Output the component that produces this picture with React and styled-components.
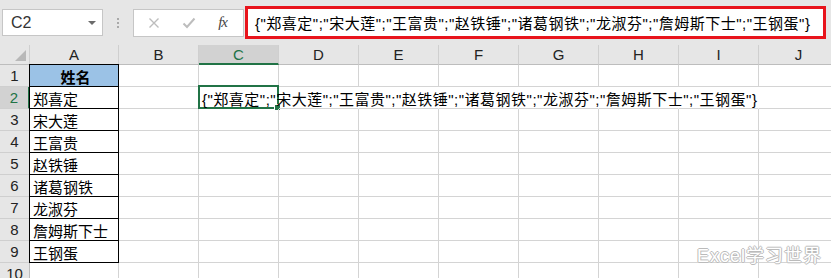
import styled, { createGlobalStyle } from "styled-components";

const GlobalStyle = createGlobalStyle`
  html, body {
    margin: 0;
    padding: 0;
    background: #fff;
    overflow: hidden;
  }
  body {
    font-family: "Liberation Sans", "Noto Sans CJK SC", sans-serif;
  }
`;

const Page = styled.div`
  position: relative;
  width: 831px;
  height: 278px;
  overflow: hidden;
  background: #fff;
`;

const FormulaBar = styled.div`
  display: flex;
  align-items: center;
  height: 45px;
  padding: 0 5px 0 2px;
  box-sizing: border-box;
  background: #e6e6e6;
`;

const NameBox = styled.div`
  display: flex;
  align-items: center;
  justify-content: space-between;
  width: 101px;
  height: 27px;
  box-sizing: border-box;
  padding: 0 6px 0 8px;
  background: #fff;
  border: 1px solid #c6c6c6;
  color: #333;
  font-size: 16px;
`;

const DropArrow = styled.span`
  width: 0;
  height: 0;
  border-left: 4px solid transparent;
  border-right: 4px solid transparent;
  border-top: 4px solid #6b6b6b;
`;

const Grip = styled.div`
  display: flex;
  flex-direction: column;
  gap: 2px;
  margin: 0 14px 0 14px;
  span {
    width: 2px;
    height: 2px;
    background: #a9a9a9;
  }
`;

const ButtonBox = styled.div`
  display: flex;
  align-items: center;
  justify-content: space-between;
  width: 111px;
  height: 28px;
  box-sizing: border-box;
  padding: 0 16px 0 14px;
  background: #fff;
  border: 1px solid #c6c6c6;
`;

const Fx = styled.span`
  font-family: "Liberation Serif", serif;
  font-style: italic;
  font-size: 15px;
  color: #444;
  letter-spacing: -1px;
`;

const FormulaInput = styled.div`
  flex: 1;
  display: flex;
  align-items: center;
  height: 33px;
  margin-left: 1px;
  box-sizing: border-box;
  padding-left: 7px;
  border: 3px solid #e8141c;
  background: #fff;
  color: #000;
  font-size: 15px;
  letter-spacing: 0.5px;
  white-space: nowrap;
`;

const Sheet = styled.div`
  display: grid;
  grid-template-columns: 30px 89px repeat(9, 80px);
  grid-template-rows: 20px;
  grid-auto-rows: 22px;
  background: #fff;
`;

const Corner = styled.div`
  position: relative;
  background: #e6e6e6;
  border-right: 1px solid #cfcfcf;
  border-bottom: 1px solid #bdbdbd;
  box-sizing: border-box;
  &::after {
    content: "";
    position: absolute;
    right: 3px;
    bottom: 3px;
    border-left: 11px solid transparent;
    border-bottom: 11px solid #b8b8b8;
  }
`;

const ColHead = styled.div`
  display: flex;
  align-items: center;
  justify-content: center;
  box-sizing: border-box;
  background: ${(p) => (p.$active ? "#d2d2d2" : "#e6e6e6")};
  border-right: 1px solid #cfcfcf;
  border-bottom: ${(p) => (p.$active ? "2px solid #217346" : "1px solid #bdbdbd")};
  color: ${(p) => (p.$active ? "#217346" : "#222")};
  font-size: 15px;
`;

const RowHead = styled.div`
  display: flex;
  align-items: center;
  justify-content: center;
  box-sizing: border-box;
  background: ${(p) => (p.$active ? "#d2d2d2" : "#e6e6e6")};
  border-bottom: 1px solid #cfcfcf;
  border-right: ${(p) => (p.$active ? "2px solid #217346" : "1px solid #bdbdbd")};
  color: ${(p) => (p.$active ? "#217346" : "#222")};
  font-size: 15px;
`;

const Cell = styled.div`
  position: relative;
  display: flex;
  align-items: center;
  justify-content: ${(p) => (p.$center ? "center" : "flex-start")};
  box-sizing: border-box;
  padding-left: 3px;
  padding-top: 1px;
  white-space: nowrap;
  overflow: visible;
  font-size: 15px;
  font-weight: ${(p) => (p.$bold ? 700 : 400)};
  color: #000;
  background: ${(p) => p.$fill || "transparent"};
  border-bottom: 1px solid ${(p) => (p.$boxed ? "#000" : "#d4d4d4")};
  border-right: 1px solid
    ${(p) => (p.$boxed ? "#000" : p.$noRight ? "transparent" : "#d4d4d4")};
  box-shadow: ${(p) =>
    p.$boxed ? `-1px 0 0 #000${p.$top ? ", 0 -1px 0 #000, -1px -1px 0 #000" : ""}` : "none"};
  z-index: ${(p) => (p.$boxed ? 1 : 0)};
`;

const Overflow = styled.span`
  position: relative;
  z-index: 2;
  letter-spacing: 0.5px;
`;

const Selection = styled.span`
  position: absolute;
  left: -1px;
  top: -2px;
  right: -1px;
  bottom: -1px;
  border: 2px solid #217346;
  pointer-events: none;
  &::after {
    content: "";
    position: absolute;
    right: -4px;
    bottom: -4px;
    width: 5px;
    height: 5px;
    background: #217346;
    border: 1px solid #fff;
  }
`;

const Watermark = styled.div`
  position: absolute;
  right: 9px;
  bottom: 11px;
  font-family: "Liberation Sans", "Noto Sans CJK SC", sans-serif;
  font-size: 18px;
  color: #fff;
  letter-spacing: 1px;
  text-shadow: 1px 0 0 #bbb, -1px 0 0 #bbb, 0 1px 0 #bbb, 0 -1px 0 #bbb;
`;

const cols = ["A", "B", "C", "D", "E", "F", "G", "H", "I", "J"];
const names = ["郑喜定", "宋大莲", "王富贵", "赵铁锤", "诸葛钢铁", "龙淑芬", "詹姆斯下士", "王钢蛋"];
const formula =
  '{"郑喜定";"宋大莲";"王富贵";"赵铁锤";"诸葛钢铁";"龙淑芬";"詹姆斯下士";"王钢蛋"}';

function XIcon() {
  return (
    <svg width="12" height="12" viewBox="0 0 12 12">
      <path d="M1.5 1.5 L10.5 10.5 M10.5 1.5 L1.5 10.5" stroke="#bdbdbd" strokeWidth="1.4" fill="none" />
    </svg>
  );
}

function CheckIcon() {
  return (
    <svg width="14" height="12" viewBox="0 0 14 12">
      <path d="M1.5 6.5 L5 10 L12.5 1.5" stroke="#bdbdbd" strokeWidth="2" fill="none" />
    </svg>
  );
}

function renderRow(r) {
  const cells = [];
  cells.push(
    <RowHead key="h" $active={r === 2}>
      {r}
    </RowHead>
  );
  cols.forEach((c, i) => {
    const key = c + r;
    if (c === "A" && r <= 9) {
      cells.push(
        <Cell
          key={key}
          $boxed
          $top={r === 1}
          $center={r === 1}
          $bold={r === 1}
          $fill={r === 1 ? "#9bc2e6" : null}
        >
          {r === 1 ? "姓名" : names[r - 2]}
        </Cell>
      );
    } else if (c === "C" && r === 2) {
      cells.push(
        <Cell key={key} $noRight>
          <Overflow>{formula}</Overflow>
          <Selection />
        </Cell>
      );
    } else {
      const overflow = r === 2 && i >= 3 && i <= 8;
      cells.push(<Cell key={key} $noRight={overflow} />);
    }
  });
  return cells;
}

export default function App() {
  return (
    <Page>
      <GlobalStyle />
      <FormulaBar>
        <NameBox>
          <span>C2</span>
          <DropArrow />
        </NameBox>
        <Grip>
          <span />
          <span />
          <span />
        </Grip>
        <ButtonBox>
          <XIcon />
          <CheckIcon />
          <Fx>fx</Fx>
        </ButtonBox>
        <FormulaInput>{formula}</FormulaInput>
      </FormulaBar>
      <Sheet>
        <Corner />
        {cols.map((c) => (
          <ColHead key={c} $active={c === "C"}>
            {c}
          </ColHead>
        ))}
        {Array.from({ length: 10 }, (_, i) => renderRow(i + 1))}
      </Sheet>
      <Watermark>Excel学习世界</Watermark>
    </Page>
  );
}
